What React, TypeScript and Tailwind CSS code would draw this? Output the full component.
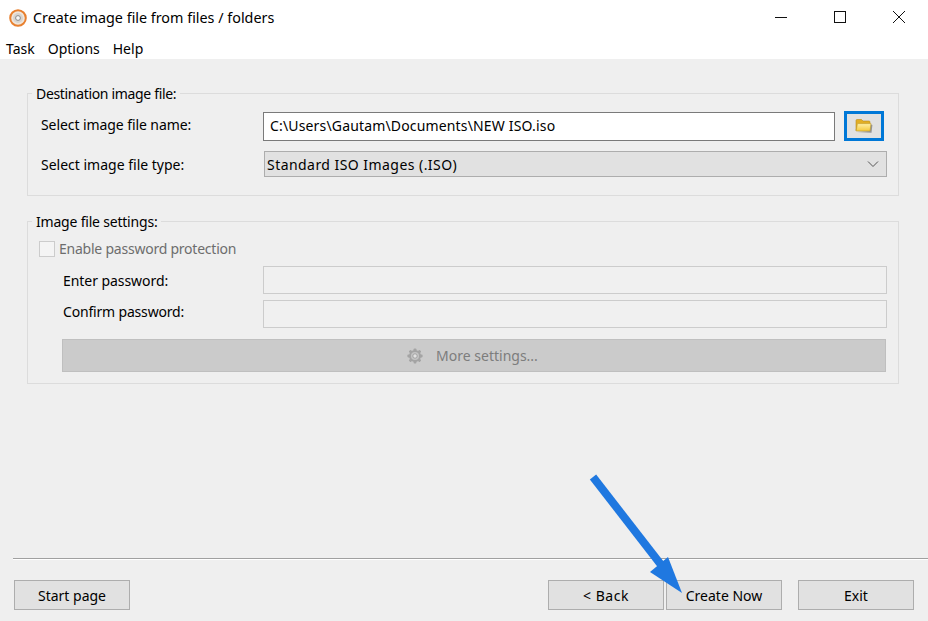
import React from 'react';

const font = { fontFamily: '"Noto Sans", "Open Sans", sans-serif' };

const WinButton = ({ label, className = '' }: { label: string; className?: string }) => (
  <button
    type="button"
    className={`flex h-[30px] w-[116px] items-center justify-center border border-[#adadad] bg-[#e1e1e1] text-[14px] text-black ${className}`}
  >
    {label}
  </button>
);

const DiscIcon = () => (
  <svg width="18" height="18" viewBox="0 0 18 18">
    <circle cx="9" cy="9" r="7.8" fill="#efe6dc" stroke="#e8802f" strokeWidth="2" />
    <circle cx="9" cy="9" r="5" fill="#d8d4cf" />
    <circle cx="9" cy="9" r="2.4" fill="#f7f7f7" stroke="#8a8a8a" strokeWidth="1" />
  </svg>
);

const FolderIcon = () => (
  <svg width="18" height="16" viewBox="0 0 18 16">
    <defs>
      <linearGradient id="folderFront" x1="0" y1="0" x2="0" y2="1">
        <stop offset="0" stopColor="#fff0a8" />
        <stop offset="1" stopColor="#f5c93c" />
      </linearGradient>
    </defs>
    <path d="M2 14 L16.5 14.8 L17.4 7 L15 6 L15 13 Z" fill="#555" opacity="0.55" />
    <path d="M1 12.5 V2.5 Q1 1.5 2 1.5 H6.5 L8 3 H14 Q15 3 15 4 V6 H3 Z" fill="#e2ae24" stroke="#b98c1c" strokeWidth="0.6" />
    <path d="M2.4 5.6 H16 L15 13 H1.2 Z" fill="url(#folderFront)" stroke="#c39a22" strokeWidth="0.6" />
  </svg>
);

const GearIcon = () => (
  <svg width="16" height="16" viewBox="0 0 16 16">
    <g fill="#a4a4a4">
      <circle cx="8" cy="8" r="6" />
      <rect x="6.6" y="0.4" width="2.8" height="15.2" rx="0.8" />
      <rect x="0.4" y="6.6" width="15.2" height="2.8" rx="0.8" />
      <rect x="6.6" y="0.4" width="2.8" height="15.2" rx="0.8" transform="rotate(45 8 8)" />
      <rect x="6.6" y="0.4" width="2.8" height="15.2" rx="0.8" transform="rotate(-45 8 8)" />
    </g>
    <circle cx="8" cy="8" r="4" fill="#c4c4c4" />
    <circle cx="8" cy="8" r="2.2" fill="#e2e2e2" stroke="#8f8f8f" strokeWidth="0.7" />
  </svg>
);

const Legend = ({ children, className = '' }: { children: React.ReactNode; className?: string }) => (
  <span className={`absolute left-[4px] top-[-10px] bg-[#efefef] px-[4px] text-[14px] leading-[20px] text-black ${className}`}>
    {children}
  </span>
);

const App = () => (
  <div style={font} className="relative flex h-[621px] w-[928px] flex-col overflow-hidden bg-white">
    {/* title bar */}
    <div className="flex h-[35px] items-center pl-[9px]">
      <DiscIcon />
      <span className="ml-[6px] text-[14.35px] text-black">Create image file from files / folders</span>
      <div className="ml-auto flex items-center pb-[2px]">
        <svg width="14" height="14" viewBox="0 0 14 14" className="mr-[45px]">
          <path d="M1 7.5 H13" stroke="#111" strokeWidth="1" fill="none" />
        </svg>
        <svg width="14" height="14" viewBox="0 0 14 14" className="mr-[45px]">
          <rect x="1.5" y="1.5" width="11" height="11" stroke="#111" strokeWidth="1" fill="none" />
        </svg>
        <svg width="14" height="14" viewBox="0 0 14 14" className="mr-[22px]">
          <path d="M1 1 L13 13 M13 1 L1 13" stroke="#111" strokeWidth="1" fill="none" />
        </svg>
      </div>
    </div>

    {/* menu */}
    <div className="flex h-[24px] items-center gap-[13px] pl-[6px] pt-[3px] text-[14px] text-black">
      <span>Task</span>
      <span>Options</span>
      <span>Help</span>
    </div>

    {/* body */}
    <div className="flex flex-1 flex-col bg-[#efefef] pt-[34px]">
      <div className="relative ml-[27px] h-[103px] w-[872px] border border-[#dcdcdc] px-[13px] pt-[17px] text-[14px] text-black">
        <Legend className="tracking-[-0.33px]">Destination image file:</Legend>
        <div className="flex h-[30px] items-center">
          <span className="w-[222px] pb-[4px] tracking-[-0.08px]">Select image file name:</span>
          <div className="flex h-[29px] w-[572px] items-center border border-[#7a7a7a] bg-white pb-[2px] pl-[6px] tracking-[0.16px]">
            C:\Users\Gautam\Documents\NEW ISO.iso
          </div>
          <div className="ml-[9px] flex h-[30px] w-[40px] items-center justify-center border-[3px] border-[#0078d7] bg-[#e1e1e1] pb-[1px]">
            <FolderIcon />
          </div>
        </div>
        <div className="mt-[9px] flex h-[27px] items-center">
          <span className="w-[223px] shrink-0 pt-[2px]">Select image file type:</span>
          <div className="flex h-[26px] w-[623px] shrink-0 items-center justify-between border border-[#adadad] bg-[#e1e1e1] pl-[2px] pr-[7px]">
            <span className="pt-[2px] tracking-[0.45px]">Standard ISO Images (.ISO)</span>
            <svg width="12" height="8" viewBox="0 0 12 8">
              <path d="M1 1.5 L6 6.5 L11 1.5" stroke="#555" strokeWidth="1" fill="none" />
            </svg>
          </div>
        </div>
      </div>

      <div className="relative ml-[27px] mt-[25px] h-[163px] w-[872px] border border-[#dcdcdc] px-[11px] pt-[19px] text-[14px] text-black">
        <Legend className="tracking-[-0.2px]">Image file settings:</Legend>
        <div className="flex h-[16px] items-center">
          <div className="size-[16px] border border-[#cccccc] bg-[#f4f4f4]" />
          <span className="ml-[4px] pb-[2px] tracking-[-0.23px] text-[#6d6d6d]">Enable password protection</span>
        </div>
        <div className="ml-[24px] mt-[9px] flex h-[28px] items-center">
          <span className="w-[200px] tracking-[-0.06px]">Enter password:</span>
          <div className="h-[28px] w-[625px] border border-[#cccccc] bg-[#f0f0f0]" />
        </div>
        <div className="ml-[24px] mt-[6px] flex h-[28px] items-center">
          <span className="w-[200px] pb-[6px] tracking-[-0.18px]">Confirm password:</span>
          <div className="h-[28px] w-[625px] border border-[#cccccc] bg-[#f0f0f0]" />
        </div>
        <div className="ml-[23px] mt-[11px] flex h-[33px] w-[824px] items-center justify-center gap-[13px] border border-[#bfbfbf] bg-[#cbcbcb] pr-[3px] text-[#7d7d7d]">
          <GearIcon />
          <span>More settings...</span>
        </div>
      </div>

      <div className="mt-auto">
        <div className="ml-[13px] border-b border-t border-b-white border-t-[#a0a0a0]" />
        <div className="mt-[20px] flex h-[30px] pl-[14px]">
          <WinButton label="Start page" />
          <WinButton label="< Back" className="ml-auto tracking-[0.5px]" />
          <WinButton label="Create Now" className="ml-[2px]" />
          <WinButton label="Exit" className="ml-[16px] mr-[14px]" />
        </div>
        <div className="h-[11px]" />
      </div>
    </div>

    {/* annotation arrow */}
    <svg className="absolute left-0 top-0" width="928" height="621" viewBox="0 0 928 621">
      <path d="M593 477 L662 566" stroke="#1f78e0" strokeWidth="8" fill="none" />
      <path d="M668 557 L682 593 L650 572 Z" fill="#1f78e0" />
    </svg>
  </div>
);

export default App;
